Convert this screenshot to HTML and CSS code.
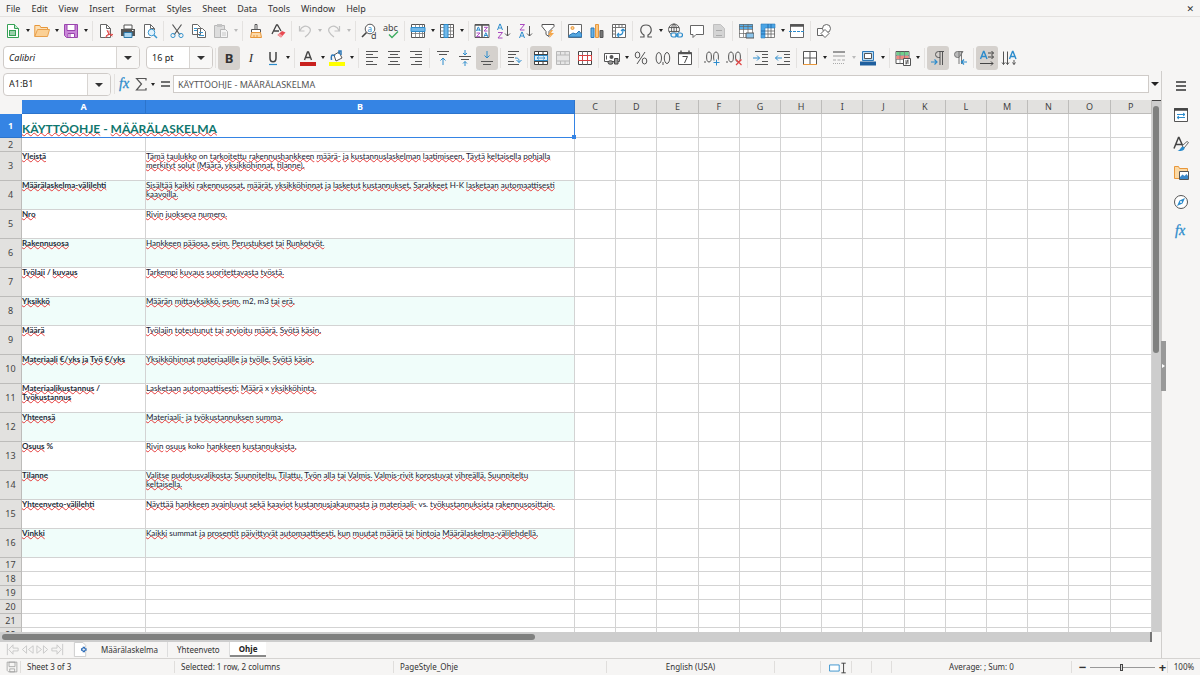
FILE: index.html
```html
<!DOCTYPE html>
<html lang="fi">
<head>
<meta charset="utf-8">
<title>Määrälaskelma</title>
<link rel="stylesheet" href="styles.css">
</head>
<body>
<svg class="sprite" aria-hidden="true">
  <symbol id="new" viewBox="0 0 16 16"><path d="M2.5 1.5h7l4 4v9h-11z" fill="#fff" stroke="#35a155"/><path d="M9.5 1.5v4h4" fill="#c5ecd0" stroke="#35a155"/><path d="M4 7h7v6H4z" fill="#35a155"/><path d="M5 9h5M5 11h5" stroke="#fff"/></symbol>
  <symbol id="open" viewBox="0 0 16 16"><path d="M.8 13.500V2.500h5l1 2h6.700v2" fill="#fce0b5" stroke="#e8973a"/><path d="M.8 13.500 3.500 6.500h12l-2 7z" fill="#fbd095" stroke="#e8a04c"/></symbol>
  <symbol id="save" viewBox="0 0 16 16"><path d="M1.500 1.500h13v13h-11l-2-2z" fill="#c986d8" stroke="#9a45ae"/><path d="M4 1.500h8v6H4z" fill="#fff" stroke="#9a45ae"/><path d="M5 10.500h6.500v4H5z" fill="#fff" stroke="#9a45ae"/><path d="M7 11v3" stroke="#9a45ae"/></symbol>
  <symbol id="pdf" viewBox="0 0 16 16"><path d="M2.500 1.500h6l4 4v9h-10z" fill="#fff" stroke="#666"/><path d="M8.500 1.500v4h4" fill="none" stroke="#666"/><path d="M9 7c1 3 2 5 5.500 6M7 14.500c3-1 4-3 4-7M8 13c2-2 4-2 7-1.500" fill="none" stroke="#e04545"/></symbol>
  <symbol id="print" viewBox="0 0 16 16"><path d="M4 2h8v4H4z" fill="#fff" stroke="#555"/><path d="M1 6h14v7H1z" fill="#555"/><path d="M4 9.500h8v5H4z" fill="#acd6f1" stroke="#2d78a8"/><path d="M12 7.500h1.500" stroke="#fff"/></symbol>
  <symbol id="preview" viewBox="0 0 16 16"><path d="M12.500 7V5.500l-4-4h-6v13h6" fill="#fff" stroke="#666"/><path d="M8.500 1.500v4h4" fill="none" stroke="#666"/><circle cx="9.500" cy="9.500" r="3.300" fill="#e2f2fc" stroke="#3a96cf"/><path d="m12 12 3 3" stroke="#3a96cf" stroke-width="1.500"/></symbol>
  <symbol id="cut" viewBox="0 0 16 16"><path d="M3.500 1.500 11 12M12.500 1.500 5 12" stroke="#555" stroke-width="1.200"/><g fill="none" stroke="#3a96cf"><circle cx="4" cy="12.500" r="2.100"/><circle cx="12" cy="12.500" r="2.100"/></g></symbol>
  <symbol id="copy" viewBox="0 0 16 16"><path d="M1.500 1.500h5l3 3v7h-8zM6.500 5.500h5l3 3v6h-8z" fill="#fff" stroke="#666"/><path d="M3 5.500h3M3 7.500h3M8 9.500h4M8 12.500h5" stroke="#3a96cf"/></symbol>
  <symbol id="paste" viewBox="0 0 16 16"><path d="M1.500 2.500h10v12h-10z" fill="#ddd" stroke="#b8b8b8"/><path d="M4 1h5v3H4z" fill="#c4c4c4"/><path d="M7.500 6.500h5l2 2v6h-7z" fill="#f4f4f4" stroke="#b8b8b8"/><path d="M9 10h4M9 12h4" stroke="#c8c8c8"/></symbol>
  <symbol id="clone" viewBox="0 0 16 16"><path d="M7 1.500h2v5H7z" fill="#fff" stroke="#555"/><path d="M3.500 6.500h9v3h-9z" fill="#fff" stroke="#555"/><path d="M3.500 9.500h9l1 5h-11z" fill="#fcd9a8" stroke="#e8973a"/><path d="M6 14v-2M9 14v-2" stroke="#e8973a"/></symbol>
  <symbol id="clear" viewBox="0 0 16 16"><path d="M2 11 6.500 2h1L11 8M4 8h5" fill="none" stroke="#444" stroke-width="1.300"/><path d="m7.500 12 4.500-4 3.500 1.500-4.500 5z" fill="#e84a52"/><path d="m7.500 12 3.500 2.500 1.500-2-3-2z" fill="#f39da1"/></symbol>
  <symbol id="undo" viewBox="0 0 16 16"><path d="M2.500 3v5h5M3 7.500C5 3 9 2 12 4.500s1 5.500-4 9.500" fill="none" stroke="#c2c2c2" stroke-width="1.200"/></symbol>
  <symbol id="redo" viewBox="0 0 16 16"><path d="M13.500 3v5h-5M13 7.500C11 3 7 2 4 4.500s-1 5.500 4 9.500" fill="none" stroke="#c2c2c2" stroke-width="1.200"/></symbol>
  <symbol id="find" viewBox="0 0 16 16"><circle cx="9" cy="6" r="4.800" fill="#fff" stroke="#555"/><path d="M5.500 9.500 1 14" stroke="#444" stroke-width="1.600"/><text x="6.500" y="8.500" font-size="8" fill="#2d8ccc">a</text><text x="10" y="15.500" font-size="9" fill="#444" stroke="#f6f5f4" stroke-width="1.500" paint-order="stroke">d</text></symbol>
  <symbol id="spell" viewBox="0 0 16 16"><text x="0" y="8" font-size="9" fill="#444">abc</text><path d="m6 11.500 3 3 6-6" fill="none" stroke="#3fae62" stroke-width="1.400"/></symbol>
  <symbol id="row" viewBox="0 0 16 16"><path d="M1.500 1.500h13v13h-13z" fill="#fff" stroke="#555"/><path d="M1.500 10.500h13M5.500 1.500v13M9.500 1.500v13M12.500 1.500v13" stroke="#777" stroke-width=".8"/><path d="M1 4.500h14v4H1z" fill="#72b8e8" stroke="#2d8ccc"/></symbol>
  <symbol id="col" viewBox="0 0 16 16"><path d="M1.500 1.500h13v13h-13z" fill="#fff" stroke="#555"/><path d="M1.500 4.500h13M1.500 8h13M1.500 11.500h13M11.500 1.500v13" stroke="#777" stroke-width=".8"/><path d="M5 1.500h4v13H5z" fill="#72b8e8" stroke="#2d8ccc"/></symbol>
  <symbol id="sort" viewBox="0 0 16 16"><path d="M1 1.500h14v13H1z" fill="#fff" stroke="#555"/><path d="M1 2h14M8 2v12" stroke="#555" stroke-width="1.500"/><g fill="none" stroke-width="1"><path d="m2.500 8 1.700-4h.3l1.700 4M3 7h3M9.700 10.500" stroke="#2d8ccc"/><path d="M2.500 10h3.500l-3.500 3.700H6" stroke="#aa4ac0"/><path d="M10 4.300h3.500L10 8h3.500" stroke="#aa4ac0"/><path d="m10 13.800 1.700-4h.3l1.700 4M10.500 12.500h3" stroke="#2d8ccc"/></g></symbol>
  <symbol id="asc" viewBox="0 0 16 16"><path d="m1.500 7 2.300-6h.4l2.300 6M2.500 5h3.200" fill="none" stroke="#2d8ccc"/><path d="M2 9.500h4.500L2 15h4.500" fill="none" stroke="#aa4ac0"/><path d="M11.500 3v10M9 10.500l2.500 2.500 2.500-2.500" fill="none" stroke="#555"/></symbol>
  <symbol id="desc" viewBox="0 0 16 16"><path d="M2 1.500h4.500L2 7h4.500" fill="none" stroke="#aa4ac0"/><path d="m1.500 15 2.300-6h.4l2.300 6M2.500 13h3.200" fill="none" stroke="#2d8ccc"/><path d="M11.500 3v10M9 10.500l2.500 2.500 2.500-2.500" fill="none" stroke="#555"/></symbol>
  <symbol id="filter" viewBox="0 0 16 16"><path d="M2 1.500h12v2l-5 5v5l-3-2v-3l-4-5z" fill="#fff" stroke="#555"/><path d="m11 7-3 5h2.500l-1.500 3.500 5-5.500h-3l2-3z" fill="#f4a64a"/></symbol>
  <symbol id="image" viewBox="0 0 16 16"><path d="M1.500 1.500h13v13h-13z" fill="#fff" stroke="#666"/><path d="M2 12.500 6 10l3 1 3-3 2.500 3v3H2z" fill="#55a8e0" stroke="#2d78b8"/><circle cx="5.500" cy="5" r="1.500" fill="#fbd095" stroke="#e8973a"/></symbol>
  <symbol id="chart" viewBox="0 0 16 16"><path d="M2 5h3v9.500H2z" fill="#65b2e6" stroke="#2d78b8"/><path d="M6.500 1.500h3v13h-3z" fill="#fbc681" stroke="#e8973a"/><path d="M11 7.500h3v7h-3z" fill="#777" stroke="#555"/></symbol>
  <symbol id="pivot" viewBox="0 0 16 16"><path d="M1.500 1.500h13v13h-13z" fill="#fff" stroke="#666"/><path d="M1.500 4.500h13M4.500 1.500v13M8 2v2M11 2v2M2 8h2M2 11h2" stroke="#777"/><path d="M7 12c4 0 5-1 5-5M6 12l2-2M6 12l2 2M12 6l-2 2M12 6l2 2" fill="none" stroke="#2d8ccc" stroke-width="1.200"/></symbol>
  <symbol id="omega" viewBox="0 0 16 16"><path d="M2 14h4v-2C1 9 2 2 8 2s7 7 2 10v2h4" fill="none" stroke="#555" stroke-width="1.200"/></symbol>
  <symbol id="link" viewBox="0 0 16 16"><g fill="none" stroke="#555" stroke-width=".9"><circle cx="7" cy="6.500" r="5.500"/><ellipse cx="7" cy="6.500" rx="2.500" ry="5.500"/><path d="M2 4.500h10M2 8.500h10M7 1v11"/></g><path d="M4 9.500h12v5H4z" fill="#f6f5f4"/><g fill="none" stroke="#2d8ccc" stroke-width="1.200"><rect x="4" y="10" width="5.500" height="4" rx="2"/><rect x="10" y="10" width="5.500" height="4" rx="2"/><path d="M8 12h4"/></g></symbol>
  <symbol id="comment" viewBox="0 0 16 16"><path d="M1.500 2.500h13v9H7l-3 3v-3H1.500z" fill="#fff" stroke="#666"/></symbol>
  <symbol id="header" viewBox="0 0 16 16"><path d="M2.500 1.500h7l4 4v9h-11z" fill="#d4d4d4" stroke="#c0c0c0"/><path d="M5 7.500h6M5 12.500h6" stroke="#aaa"/></symbol>
  <symbol id="range" viewBox="0 0 16 16"><path d="M1.500 1.500h13v13h-13z" fill="#fff"/><path d="M1 1h14v5H1z" fill="#58aee8"/><path d="M1.500 1.500h13v13h-13zM1 6.500h14M1 10.500h14M5.500 1v13M10 1v13M1 3.500h14" fill="none" stroke="#666" stroke-width=".7"/><path d="M8 10h8v5H8z" fill="#8bc5ec" stroke="#555"/></symbol>
  <symbol id="freeze" viewBox="0 0 16 16"><path d="M1.500 1.500h13v13h-13z" fill="#fff"/><path d="M1.500 1.500h13v13h-13zM5 8h10M5 11h10M8 5v10M11 5v10" fill="none" stroke="#666" stroke-width=".8"/><path d="M1 1h14v4H5v10H1z" fill="#4aa5e6" stroke="#2d78b8" stroke-width=".6"/><path d="M1 8h4M1 11h4M8 1v4M11 1v4" stroke="#1f5f9e" stroke-width=".8"/></symbol>
  <symbol id="split" viewBox="0 0 16 16"><path d="M1.500 1.500h13v13h-13z" fill="#fff" stroke="#666"/><path d="M1 2.500h14" stroke="#555" stroke-width="2.500"/><path d="M0 8.500h16" stroke="#2d8ccc" stroke-dasharray="3 1"/></symbol>
  <symbol id="shapes" viewBox="0 0 16 16"><g fill="#fff" stroke="#666"><path d="M1.500 5.500h7v7h-7z"/><circle cx="10.500" cy="5.500" r="4"/><path d="m9 6.500 4 4-4 4-4-4z"/></g></symbol>

  <symbol id="under" viewBox="0 0 16 16"><path d="M5 2v6c0 5 6 5 6 0V2" fill="none" stroke="#444" stroke-width="1.500"/><path d="M4 14.500h8" stroke="#2d8ccc" stroke-width="1.200"/></symbol>
  <symbol id="fcolor" viewBox="0 0 16 16"><path d="m4.500 10 3-8h1l3 8M6 7.500h4" fill="none" stroke="#444" stroke-width="1.400"/><path d="M0 12h16v4H0z" fill="#c9211e"/></symbol>
  <symbol id="hcolor" viewBox="0 0 16 16"><path d="m5 5 5-3 3 6-6 3z" fill="#fff" stroke="#555"/><path d="M6 6c-4-3-4 1-3.500 4M10 4V1h2v4" fill="none" stroke="#2d78b8" stroke-width="1.500"/><path d="M0 12h16v4H0z" fill="#ff0"/></symbol>
  <symbol id="left" viewBox="0 0 16 16"><path d="M2 1.500h12M2 4.500h7M2 7.500h12M2 11.500h7M2 14.500h11" stroke="#555"/></symbol>
  <symbol id="center" viewBox="0 0 16 16"><path d="M2 1.500h12M4 4.500h8M2 7.500h12M4 11.500h8M2 14.500h12" stroke="#555"/></symbol>
  <symbol id="right" viewBox="0 0 16 16"><path d="M2 1.500h12M7 4.500h7M2 7.500h12M7 11.500h7M3 14.500h11" stroke="#555"/></symbol>
  <symbol id="top" viewBox="0 0 16 16"><path d="M2 1.500h12M4 4.500h8" stroke="#555"/><path d="M8 15V8M5.500 10.500 8 8l2.500 2.500" fill="none" stroke="#2d8ccc"/></symbol>
  <symbol id="middle" viewBox="0 0 16 16"><path d="M2 6.500h12M4 9.500h8" stroke="#555"/><path d="M8 0v5M6 3l2 2 2-2M8 16v-4.500M6 13.500l2-2 2 2" fill="none" stroke="#2d8ccc"/></symbol>
  <symbol id="bottom" viewBox="0 0 16 16"><path d="M2 11.500h12M4 14.500h8" stroke="#555"/><path d="M8 1v7M5.500 5.500 8 8l2.500-2.500" fill="none" stroke="#2d8ccc"/></symbol>
  <symbol id="wrap" viewBox="0 0 16 16"><path d="M2 1.500h11M2 4.500h8M2 7.500h6M2 11.500h6M2 14.500h11" stroke="#555"/><path d="M9 8c4 0 4 1 4 4.500M10.500 10l2.500 2.500 2.500-2.500" fill="none" stroke="#2d8ccc"/></symbol>
  <symbol id="mergec" viewBox="0 0 16 16"><path d="M1.500 1.500h13v13h-13z" fill="#fff" stroke="#444"/><path d="M1.500 4.500h13M1.500 11.500h13M5.500 1.500v3M10 1.500v3M5.500 11.500v3M10 11.500v3" stroke="#444"/><path d="M1.500 5.500h13v5h-13z" fill="#d8ecfa" stroke="#2d8ccc"/><path d="M4 8h8M6 6.500 4 8l2 1.500M10 6.500 12 8l-2 1.500" fill="none" stroke="#2d8ccc" stroke-width=".8"/></symbol>
  <symbol id="merge" viewBox="0 0 16 16"><path d="M1.500 1.500h13v13h-13z" fill="#e6e6e6" stroke="#b8b8b8"/><path d="M1.500 5h13M1.500 11h13M5.500 1.500V5M10 1.500V5M5.500 11v3M10 11v3" stroke="#b8b8b8"/></symbol>
  <symbol id="unmerge" viewBox="0 0 16 16"><path d="M1.500 1.500h13v13h-13z" fill="#fff" stroke="#444"/><path d="M5.500 1.500v13M10.500 1.500v13" stroke="#777"/><path d="M1.500 5.500h13v5h-13zM5.500 5.500v5M10.500 5.500v5" fill="#fff" stroke="#d84040"/></symbol>
  <symbol id="money" viewBox="0 0 16 16"><path d="M.5 3.500h15v8H.5z" fill="#fff" stroke="#555"/><circle cx="7.500" cy="7" r="2" fill="#555"/><path d="M2.500 5.500v4" stroke="#555"/><ellipse cx="6.500" cy="12.500" rx="2.500" ry="1.800" fill="#999" stroke="#444"/><path d="M10.500 8.500h3.500v5.500h-3.500z" fill="#999" stroke="#444"/></symbol>
  <symbol id="percent" viewBox="0 0 16 16"><g fill="none" stroke="#555"><ellipse cx="4.500" cy="5" rx="2.300" ry="3"/><ellipse cx="11.500" cy="11" rx="2.300" ry="3"/><path d="m12 2-8 12"/></g></symbol>
  <symbol id="number" viewBox="0 0 16 16"><g fill="none" stroke="#555"><ellipse cx="3.800" cy="8" rx="2.700" ry="5.500"/><ellipse cx="12" cy="8" rx="2.700" ry="5.500"/></g><path d="M8 12v3" stroke="#555"/></symbol>
  <symbol id="date" viewBox="0 0 16 16"><path d="M1.500 2.500h13v12h-13z" fill="#fff" stroke="#555"/><path d="M1 3.500h14M4 .5v3M12 .5v3" stroke="#555" stroke-width="1.500"/><path d="M5.500 6.500h5l-3 6.500" fill="none" stroke="#444"/></symbol>
  <symbol id="adddec" viewBox="0 0 16 16"><g fill="none" stroke="#555"><ellipse cx="5" cy="7" rx="2.400" ry="5"/><ellipse cx="12" cy="7" rx="2.400" ry="5"/><path d="M1 11v2"/></g><path d="M12.500 9v6M9.500 12h6" stroke="#f6f5f4" stroke-width="3"/><path d="M12.500 9.500v6M9.500 12.500h6" stroke="#2d8ccc"/></symbol>
  <symbol id="deldec" viewBox="0 0 16 16"><g fill="none" stroke="#555"><ellipse cx="5" cy="7" rx="2.400" ry="5"/><ellipse cx="12" cy="7" rx="2.400" ry="5"/><path d="M1 11v2"/></g><path d="m10 9.500 5.500 5.500M15.500 9.500 10 15" stroke="#e04545" stroke-width="1.200"/></symbol>
  <symbol id="indent" viewBox="0 0 16 16"><path d="M2 1.500h13M9 4.500h6M9 7.500h6M9 11.500h6M2 14.500h13" stroke="#555"/><path d="M0 8h6.500M4 5.500 6.500 8 4 10.500" fill="none" stroke="#2d8ccc"/></symbol>
  <symbol id="outdent" viewBox="0 0 16 16"><path d="M2 1.500h13M9 4.500h6M9 7.500h6M9 11.500h6M2 14.500h13" stroke="#555"/><path d="M7 8H.5M3 5.500.5 8 3 10.500" fill="none" stroke="#2d8ccc"/></symbol>
  <symbol id="border" viewBox="0 0 16 16"><path d="M1.500 1.500h13v13h-13zM8 1.500v13M1.500 8h13" fill="#fff" stroke="#555"/><path d="M1 14.500h14" stroke="#e8973a"/></symbol>
  <symbol id="bstyle" viewBox="0 0 16 16"><path d="M2 2h12" stroke="#999" stroke-width="2"/><path d="M2 6h12" stroke="#999"/><path d="M2 10h12" stroke="#aaa" stroke-dasharray="3 1.500"/><path d="M2 13.500h12" stroke="#aaa" stroke-dasharray="1 1"/></symbol>
  <symbol id="bcolor" viewBox="0 0 16 16"><path d="M2.500 1.500h11v9h-11z" fill="#b9dcf5" stroke="#2d78b8"/><path d="M4.500 3.500h7v5h-7z" fill="#fff" stroke="#555"/><path d="M0 11.500h16v4H0z" fill="#1f5f9e"/></symbol>
  <symbol id="cond" viewBox="0 0 16 16"><path d="M1 1.500h13v12H1z" fill="#fff" stroke="#555"/><path d="M1.500 2h12v3h-12z" fill="#6fcf8c"/><path d="M1.500 6h12v3h-12z" fill="#f08a80"/><path d="M1 5.500h13M1 9.500h13M5 1.500v12M9.500 1.500v12" stroke="#777" stroke-width=".7"/><path d="M8.500 8.500h7v7h-7z" fill="#fff" stroke="#555"/><path d="M10 11h4M10 13h4M13 9.500l-2 5" stroke="#444" stroke-width=".8"/></symbol>
  <symbol id="ltr" viewBox="0 0 16 16"><path d="M14 1.500H8.500a3 3 0 0 0 0 6H10M10 1.500V15M12.500 1.500V15" fill="none" stroke="#555"/><path d="M1 12h6M4.500 9.500 7 12l-2.500 2.500" fill="none" stroke="#2d8ccc" stroke-width="1.200"/></symbol>
  <symbol id="rtl" viewBox="0 0 16 16"><path d="M11 1.500H5.500a3 3 0 0 0 0 6H7z" fill="#bbb" stroke="#777"/><path d="M7 1.500V14M9.500 1.500V14" fill="none" stroke="#777"/><path d="M15 12H9.500M12 9.500 9.500 12l2.500 2.500" fill="none" stroke="#2d8ccc" stroke-width="1.200"/></symbol>
  <symbol id="tdh" viewBox="0 0 16 16"><path d="m1.500 9 3-7.500h.5l3 7.500M3 6.500h4" fill="none" stroke="#2d8ccc" stroke-width="1.400"/><path d="M9 3h5.500M9 7h5.500M1 13.500h13M12.500 1l2 2-2 2M12.500 5l2 2-2 2M12 11.500l2 2-2 2" fill="none" stroke="#444"/></symbol>
  <symbol id="tdv" viewBox="0 0 16 16"><path d="m8.500 9 3-7.500h.5l3 7.500M10 6.500h4" fill="none" stroke="#2d8ccc" stroke-width="1.400"/><path d="M2.500 1.500v13M6.500 1.500v13M1 12.500l1.500 2 1.500-2M5 12.500l1.500 2 1.500-2M13 10v4.500M11.500 12.500l1.500 2 1.500-2" fill="none" stroke="#555"/></symbol>

  <symbol id="fx" viewBox="0 0 16 16"><text x="2" y="12" class="fx-glyph">fx</text></symbol>
  <symbol id="sigma" viewBox="0 0 16 16"><path d="M13 4.500v-2H3.500l5 5.500-5 6H13v-2" fill="none" stroke="#555" stroke-width="1.200"/></symbol>
  <symbol id="equals" viewBox="0 0 16 16"><path d="M4 6h9M4 10h9" stroke="#444" stroke-width="1.600"/></symbol>
  <symbol id="burger" viewBox="0 0 16 16"><path d="M3 4h10M3 8h10M3 12h10" stroke="#333" stroke-width="1.400"/></symbol>
  <symbol id="props" viewBox="0 0 16 16"><path d="M1.500 1.500h13v13h-13z" fill="#fff" stroke="#555"/><path d="M1 2.500h14" stroke="#444" stroke-width="2.500"/><path d="M4 7.500h8M4 10.500h8M10 6l2 1.500L10 9M6 9l-2 1.500L6 12" fill="none" stroke="#2d8ccc"/></symbol>
  <symbol id="styles" viewBox="0 0 16 16"><path d="M1 12.500 5.500 1.500h.5l4 9M3 8.500h6" fill="none" stroke="#444" stroke-width="1.500"/><path d="m9 10 5-4.500 1.500 1L11 12z" fill="#fff" stroke="#666"/><path d="M10.500 10.500c-3 0-3 3.500-6 4.500 5 .5 7.500-1 7-3.500z" fill="#2d8ccc"/></symbol>
  <symbol id="gallery" viewBox="0 0 16 16"><path d="M1.500 13.500v-12h4l1 2h8v10z" fill="#fbd9a5" stroke="#e8973a"/><path d="M6.500 6.500h9v8h-9z" fill="#fff" stroke="#555"/><path d="m7 12 2.500-2.500 2 1.500 2-2L15 11v3H7z" fill="#3c88c8"/></symbol>
  <symbol id="compass" viewBox="0 0 16 16"><circle cx="8" cy="8" r="6.500" fill="#fff" stroke="#555"/><path d="m12 4-2.500 5.500L4 12l2.500-5.500z" fill="#2d8ccc"/><circle cx="8" cy="8" r="1" fill="#fff"/></symbol>
  <symbol id="first" viewBox="0 0 16 16"><path d="M2.500 2v12M14 6.500H8.500V3L4 8l4.500 5V9.500H14z" fill="none" stroke="#c9c9c9"/></symbol>
  <symbol id="prev" viewBox="0 0 16 16"><path d="M7 4 2.500 8 7 12zM14 4 9 8l5 4z" fill="none" stroke="#c9c9c9"/></symbol>
  <symbol id="next" viewBox="0 0 16 16"><path d="m2 4 5 4-5 4zM9 4l4.500 4L9 12z" fill="none" stroke="#c9c9c9"/></symbol>
  <symbol id="last" viewBox="0 0 16 16"><path d="M13.500 2v12M2 6.500h5.500V3L12 8l-4.500 5V9.500H2z" fill="none" stroke="#c9c9c9"/></symbol>
  <symbol id="addsheet" viewBox="0 0 16 16"><path d="M1.500.5h9l3 3v12h-12z" fill="#fff" stroke="#ccc"/><path d="M11.500 5v6M8.500 8h6" stroke="#2d6cb8" stroke-width="2.500"/><path d="M10 8h3M11.500 6.500v3" stroke="#fff" stroke-width=".8"/></symbol>
  <symbol id="disk" viewBox="0 0 16 16"><path d="M1.500 1.500h13v13h-11l-2-2zM4 1.500h8v6H4zM5 10.500h6.500v4H5z" fill="none" stroke="#999"/></symbol>
  <symbol id="selmode" viewBox="0 0 20 16"><path d="M1.500 4.500h11v7h-11z" fill="#fff" stroke="#2d8ccc"/><path d="M15 2.500h5M17.500 2.500v11M15 13.500h5" stroke="#333"/></symbol>
</svg>

<div class="app">
  <nav class="menubar" aria-label="Menu">
    <button>File</button><button>Edit</button><button>View</button><button>Insert</button><button>Format</button><button>Styles</button><button>Sheet</button><button>Data</button><button>Tools</button><button>Window</button><button>Help</button>
    <button class="close" aria-label="Close">✕</button>
  </nav>

  <div class="toolbar" role="toolbar" aria-label="Standard">
    <button class="tool" aria-label="New"><svg><use href="#new"/></svg></button><button class="caret" aria-label="New options"></button>
    <button class="tool" aria-label="Open"><svg><use href="#open"/></svg></button><button class="caret" aria-label="Open options"></button>
    <button class="tool" aria-label="Save"><svg><use href="#save"/></svg></button><button class="caret" aria-label="Save options"></button>
    <i class="sep"></i>
    <button class="tool" aria-label="Export PDF"><svg><use href="#pdf"/></svg></button>
    <button class="tool" aria-label="Print"><svg><use href="#print"/></svg></button>
    <button class="tool" aria-label="Preview"><svg><use href="#preview"/></svg></button>
    <i class="sep"></i>
    <button class="tool" aria-label="Cut"><svg><use href="#cut"/></svg></button>
    <button class="tool" aria-label="Copy"><svg><use href="#copy"/></svg></button>
    <button class="tool" aria-label="Paste"><svg><use href="#paste"/></svg></button><button class="caret off" aria-label="Paste options"></button>
    <i class="sep"></i>
    <button class="tool" aria-label="Clone formatting"><svg><use href="#clone"/></svg></button>
    <button class="tool" aria-label="Clear formatting"><svg><use href="#clear"/></svg></button>
    <i class="sep"></i>
    <button class="tool" aria-label="Undo"><svg><use href="#undo"/></svg></button><button class="caret off" aria-label="Undo list"></button>
    <button class="tool" aria-label="Redo"><svg><use href="#redo"/></svg></button><button class="caret off" aria-label="Redo list"></button>
    <i class="sep"></i>
    <button class="tool" aria-label="Find"><svg><use href="#find"/></svg></button>
    <button class="tool" aria-label="Spelling"><svg><use href="#spell"/></svg></button>
    <i class="sep"></i>
    <button class="tool" aria-label="Row"><svg><use href="#row"/></svg></button><button class="caret" aria-label="Row options"></button>
    <button class="tool" aria-label="Column"><svg><use href="#col"/></svg></button><button class="caret" aria-label="Column options"></button>
    <i class="sep"></i>
    <button class="tool" aria-label="Sort"><svg><use href="#sort"/></svg></button>
    <button class="tool" aria-label="Sort ascending"><svg><use href="#asc"/></svg></button>
    <button class="tool" aria-label="Sort descending"><svg><use href="#desc"/></svg></button>
    <button class="tool" aria-label="AutoFilter"><svg><use href="#filter"/></svg></button>
    <i class="sep"></i>
    <button class="tool" aria-label="Image"><svg><use href="#image"/></svg></button>
    <button class="tool" aria-label="Chart"><svg><use href="#chart"/></svg></button>
    <button class="tool" aria-label="Pivot table"><svg><use href="#pivot"/></svg></button>
    <i class="sep"></i>
    <button class="tool" aria-label="Symbol"><svg><use href="#omega"/></svg></button><button class="caret" aria-label="Symbol options"></button>
    <button class="tool" aria-label="Hyperlink"><svg><use href="#link"/></svg></button>
    <button class="tool" aria-label="Comment"><svg><use href="#comment"/></svg></button>
    <button class="tool" aria-label="Headers and footers"><svg><use href="#header"/></svg></button>
    <i class="sep"></i>
    <button class="tool" aria-label="Print range"><svg><use href="#range"/></svg></button>
    <button class="tool" aria-label="Freeze"><svg><use href="#freeze"/></svg></button><button class="caret" aria-label="Freeze options"></button>
    <button class="tool" aria-label="Split window"><svg><use href="#split"/></svg></button>
    <i class="sep"></i>
    <button class="tool" aria-label="Draw functions"><svg><use href="#shapes"/></svg></button>
  </div>

  <div class="toolbar" role="toolbar" aria-label="Formatting">
    <label class="combo combo-font"><select aria-label="Font name"><option>Calibri</option></select></label>
    <label class="combo combo-size"><select aria-label="Font size"><option>16 pt</option></select></label>
    <i class="sep"></i>
    <button class="tool on letter bold" aria-label="Bold">B</button>
    <button class="tool letter italic" aria-label="Italic">I</button>
    <button class="tool" aria-label="Underline"><svg><use href="#under"/></svg></button><button class="caret" aria-label="Underline options"></button>
    <i class="sep"></i>
    <button class="tool" aria-label="Font colour"><svg><use href="#fcolor"/></svg></button><button class="caret" aria-label="Font colour options"></button>
    <button class="tool" aria-label="Background colour"><svg><use href="#hcolor"/></svg></button><button class="caret" aria-label="Background options"></button>
    <i class="sep"></i>
    <button class="tool" aria-label="Align left"><svg><use href="#left"/></svg></button>
    <button class="tool" aria-label="Center"><svg><use href="#center"/></svg></button>
    <button class="tool" aria-label="Align right"><svg><use href="#right"/></svg></button>
    <i class="sep"></i>
    <button class="tool" aria-label="Align top"><svg><use href="#top"/></svg></button>
    <button class="tool" aria-label="Align middle"><svg><use href="#middle"/></svg></button>
    <button class="tool on" aria-label="Align bottom"><svg><use href="#bottom"/></svg></button>
    <i class="sep"></i>
    <button class="tool" aria-label="Wrap text"><svg><use href="#wrap"/></svg></button>
    <i class="sep"></i>
    <button class="tool on" aria-label="Merge and center"><svg><use href="#mergec"/></svg></button>
    <button class="tool" aria-label="Merge"><svg><use href="#merge"/></svg></button>
    <button class="tool" aria-label="Unmerge"><svg><use href="#unmerge"/></svg></button>
    <i class="sep"></i>
    <button class="tool" aria-label="Currency"><svg><use href="#money"/></svg></button><button class="caret" aria-label="Currency options"></button>
    <button class="tool" aria-label="Percent"><svg><use href="#percent"/></svg></button>
    <button class="tool" aria-label="Number"><svg><use href="#number"/></svg></button>
    <button class="tool" aria-label="Date"><svg><use href="#date"/></svg></button>
    <i class="sep"></i>
    <button class="tool" aria-label="Add decimal"><svg><use href="#adddec"/></svg></button>
    <button class="tool" aria-label="Delete decimal"><svg><use href="#deldec"/></svg></button>
    <i class="sep"></i>
    <button class="tool" aria-label="Increase indent"><svg><use href="#indent"/></svg></button>
    <button class="tool" aria-label="Decrease indent"><svg><use href="#outdent"/></svg></button>
    <i class="sep"></i>
    <button class="tool" aria-label="Borders"><svg><use href="#border"/></svg></button><button class="caret" aria-label="Border options"></button>
    <button class="tool" aria-label="Border style"><svg><use href="#bstyle"/></svg></button><button class="caret off" aria-label="Border style options"></button>
    <button class="tool" aria-label="Border colour"><svg><use href="#bcolor"/></svg></button><button class="caret" aria-label="Border colour options"></button>
    <i class="sep"></i>
    <button class="tool" aria-label="Conditional"><svg><use href="#cond"/></svg></button><button class="caret" aria-label="Conditional options"></button>
    <i class="sep"></i>
    <button class="tool on" aria-label="Left to right"><svg><use href="#ltr"/></svg></button>
    <button class="tool" aria-label="Right to left"><svg><use href="#rtl"/></svg></button>
    <i class="sep"></i>
    <button class="tool on" aria-label="Text direction horizontal"><svg><use href="#tdh"/></svg></button>
    <button class="tool" aria-label="Text direction vertical"><svg><use href="#tdv"/></svg></button>
  </div>

  <div class="work">
    <main class="main">
      <div class="formula">
        <label class="combo combo-name"><select aria-label="Name box"><option>A1:B1</option></select></label>
        <i class="sep"></i>
        <button class="mini" aria-label="Function wizard"><svg><use href="#fx"/></svg></button>
        <button class="mini" aria-label="Sum"><svg><use href="#sigma"/></svg></button><button class="caret" aria-label="Sum options"></button>
        <button class="mini" aria-label="Formula"><svg><use href="#equals"/></svg></button>
        <input class="formula-input" aria-label="Input line" value="KÄYTTÖOHJE - MÄÄRÄLASKELMA">
        <button class="caret expand" aria-label="Expand"></button>
      </div>
      <div class="grid-row">
        <div class="sheet">
          <table>
            <colgroup id="cols"><col class="c-head"><col class="c-a"><col class="c-b"></colgroup>
            <thead><tr id="heads"><th></th></tr></thead>
            <tbody id="rows"></tbody>
          </table>
        </div>
        <div class="vscroll"><div class="vthumb"></div></div>
      </div>
      <div class="hscroll"><div class="hthumb"></div></div>
      <div class="tabs">
        <button aria-label="First sheet"><svg><use href="#first"/></svg></button>
        <button aria-label="Previous sheet"><svg><use href="#prev"/></svg></button>
        <button aria-label="Next sheet"><svg><use href="#next"/></svg></button>
        <button aria-label="Last sheet"><svg><use href="#last"/></svg></button>
        <button class="add" aria-label="Add sheet"><svg><use href="#addsheet"/></svg></button>
        <button class="tab">Määrälaskelma</button>
        <button class="tab">Yhteenveto</button>
        <button class="tab current">Ohje</button>
      </div>
    </main>
    <aside class="sidebar">
      <button aria-label="Settings"><svg><use href="#burger"/></svg></button>
      <button aria-label="Properties"><svg><use href="#props"/></svg></button>
      <button aria-label="Styles"><svg><use href="#styles"/></svg></button>
      <button aria-label="Gallery"><svg><use href="#gallery"/></svg></button>
      <button aria-label="Navigator"><svg><use href="#compass"/></svg></button>
      <button aria-label="Functions"><svg><use href="#fx"/></svg></button>
      <div class="handle"></div>
    </aside>
  </div>

  <footer class="status">
    <span class="cell-icon"><svg><use href="#disk"/></svg></span>
    <span>Sheet 3 of 3</span>
    <span>Selected: 1 row, 2 columns</span>
    <span>PageStyle_Ohje</span>
    <span class="mid">English (USA)</span>
    <span></span>
    <span class="cell-icon"><svg class="wide"><use href="#selmode"/></svg></span>
    <span></span>
    <span></span>
    <span class="mid">Average: ; Sum: 0</span>
    <span class="zoom"><button aria-label="Zoom out">−</button><input type="range" min="0" max="100" value="49" aria-label="Zoom"><button aria-label="Zoom in">+</button></span>
    <span class="mid">100%</span>
  </footer>
</div>
<script src="grid.js"></script>
</body>
</html>
```
FILE: styles.css
```css
* { box-sizing: border-box; }
body { margin: 0; background: #f6f5f4; color: #333; font: 9px/12px "Noto Sans", "Open Sans", sans-serif; }
button { margin: 0; padding: 0; border: 0; background: none; color: inherit; font: inherit; }
svg { display: block; width: 16px; height: 16px; font-family: "Noto Sans", sans-serif; }
.sprite { display: none; }
.fx-glyph { font: italic 14px "Liberation Serif", serif; fill: #2d8ccc; stroke: #2d8ccc; stroke-width: .3; }
.app { display: flex; flex-direction: column; height: 100vh; overflow: hidden; }

.menubar { display: flex; gap: 11px; height: 17px; padding: 1px 6px 0; border-bottom: 1px solid #e4e2e0; flex: none; }
.menubar .close { margin-left: auto; font: bold 9px "DejaVu Sans", sans-serif; }

.toolbar { display: flex; align-items: center; height: 27px; padding-left: 2px; flex: none; }
.tool { display: flex; align-items: center; justify-content: center; width: 22px; height: 24px; border-radius: 3px; flex: none; }
.tool.on { background: #d5d1cd; }
.letter { font: 13px/24px "Noto Sans", sans-serif; }
.bold { font-weight: 700; }
.italic { font-style: italic; font-family: "Liberation Serif", serif; }
.caret { width: 7px; height: 20px; display: flex; align-items: center; justify-content: center; flex: none; }
.caret::before { content: ""; border: 2px solid transparent; border-top: 3px solid #222; border-bottom: 0; }
.caret.off::before { border-top-color: #bbb; }
.sep { width: 5px; height: 20px; background: linear-gradient(#e4e2e0, #e4e2e0) center / 1px 100% no-repeat; flex: none; }
.caret + .sep { width: 6px; }

.combo { position: relative; display: block; height: 23px; border: 1px solid #cfcbc8; border-radius: 4px; background: #fff; overflow: hidden; flex: none; }
.combo select { width: 100%; height: 100%; padding: 0 26px 0 5px; border: 0; background: none; color: #222; font: inherit; appearance: none; }
.combo::before { content: ""; position: absolute; right: 0; top: 0; width: 22px; height: 100%; background: #f8f7f6; border-left: 1px solid #d8d5d2; }
.combo::after { content: ""; position: absolute; right: 7px; top: 9px; border: 4px solid transparent; border-top-color: #333; border-bottom: 0; }
.combo-font { width: 137px; margin: 0 6px 0 1px; }
.combo-font select { font-style: italic; }
.combo-size { width: 67px; }
.combo-name { width: 108px; margin: 0 1px 0 3px; }

.work { display: flex; flex: 1; min-height: 0; }
.main { display: flex; flex-direction: column; flex: 1; min-width: 0; }
.formula { display: flex; align-items: center; height: 29px; padding-bottom: 3px; flex: none; }
.mini { width: 16px; flex: none; }
.formula .caret { width: 8px; }
.formula .expand { width: 12px; }
.formula .expand::before { border-width: 4px 4px 0; }
.formula-input { flex: 1; min-width: 0; height: 18px; padding: 0 4px; border: 1px solid #cfcbc8; background: #fff; color: #555; font: inherit; }

.grid-row { display: flex; flex: 1; min-height: 0; }
.sheet { flex: 1; min-width: 0; overflow: hidden; background: #fff; }
.sheet table { width: 100%; table-layout: fixed; border-collapse: separate; border-spacing: 0; }
.c-head { width: 22px; }
.c-a { width: 124px; }
.c-b { width: 429px; }
.sheet th { height: 14px; padding: 0; border-right: 1px solid #bdbcba; border-bottom: 1px solid #bdbcba; background: #e2e1df; color: #444; font-size: 9px; line-height: 12px; font-weight: 400; }
.sheet thead th:first-child { background: #f6f5f4; border-color: #f6f5f4; }
.sheet th.sel { background: #3584e4; border-color: #2c74cc; color: #fff; font-weight: 700; }
.sheet td { height: 14px; padding: 0 12px 0 0; border-right: 1px solid #d3d3d3; border-bottom: 1px solid #d3d3d3; vertical-align: top; color: #223; font: 8px/9px Lato, sans-serif; overflow: hidden; }
.sheet .label { padding-right: 1px; font-weight: 700; color: #1f2d3a; }
.sheet tr.note td { height: 29px; }
.sheet tr.tint .fill { background: #f0fdfa; }
.sheet tr.first td { height: 24px; }
.sheet td.title { position: relative; overflow: visible; vertical-align: bottom; border-right: 1px solid #3584e4; border-bottom: 1px solid #3584e4; color: #0f766e; font-size: 12px; line-height: 16px; font-weight: 700; }
.title::after { content: ""; position: absolute; right: -2px; bottom: -2px; width: 4px; height: 4px; background: #3584e4; }
.typo { text-decoration: underline wavy #e53c3c 1px; text-underline-offset: -1px; text-decoration-skip-ink: none; }

.vscroll { width: 9px; padding: 5px 2px 0 1px; background: #cdcdcd; border-top: 1px solid #444; flex: none; }
.vthumb { height: 47%; border-radius: 3px; background: #7f807f; }
.hscroll { height: 10px; margin-right: 9px; padding: 2px; background: #cdcdcd; border-right: 2px solid #777; flex: none; }
.hthumb { width: 46.5%; height: 6px; border-radius: 3px; background: #7f807f; }
.tabs { display: flex; height: 16px; padding-left: 5px; font-size: 8px; flex: none; }
.tabs button { height: 15px; }
.tabs button svg { width: 15px; height: 15px; }
.tabs .add { margin: 0 4px 0 8px; }
.tabs .tab { padding: 0 9px; border-right: 1px solid #ddd; }
.tabs .tab.current { background: #fff; border: 0; border-bottom: 2px solid #888; font-weight: 700; color: #222; }

.sidebar { position: relative; display: flex; flex-direction: column; align-items: center; gap: 13px; width: 39px; padding-top: 7px; border-left: 1px solid #d0cecc; flex: none; }
.handle { position: absolute; left: -1px; top: 46%; width: 5px; height: 50px; background: #999; }
.handle::after { content: ""; position: absolute; top: 23px; left: 1px; border: 2px solid transparent; border-left: 3px solid #fff; border-right: 0; }

.status { display: grid; grid-template-columns: 21px 154fr 219fr 213fr 168fr 46px 31px 20px 20px 180fr 96px 32px; align-items: center; height: 17px; border-top: 1px solid #d5d3d1; font-size: 8px; flex: none; }
.status > span { height: 12px; padding-left: 6px; border-right: 1px solid #e0dedc; white-space: nowrap; }
.status > .mid { padding: 0; text-align: center; }
.status > span:last-child { border: 0; }
.status svg { width: 12px; height: 12px; }
.status svg.wide { width: 20px; height: 14px; }
.zoom { display: flex; align-items: center; gap: 3px; }
.zoom button { width: 9px; font: bold 13px/12px "Noto Sans", sans-serif; }
.zoom input { flex: 1; min-width: 0; height: 8px; margin: 0; background: linear-gradient(#999, #999) center / 100% 1px no-repeat; appearance: none; }
.zoom input::-webkit-slider-thumb { width: 3px; height: 7px; border: 1px solid #444; background: #ddd; appearance: none; }
```
FILE: grid.js
```js
const notes = [
  ["Yleistä", "Tämä taulukko on tarkoitettu rakennushankkeen määrä- ja kustannuslaskelman laatimiseen. Täytä keltaisella pohjalla merkityt solut (Määrä, yksikköhinnat, tilanne)."],
  ["Määrälaskelma-välilehti", "Sisältää kaikki rakennusosat, määrät, yksikköhinnat ja lasketut kustannukset. Sarakkeet H-K lasketaan automaattisesti kaavoilla."],
  ["Nro", "Rivin juokseva numero."],
  ["Rakennusosa", "Hankkeen pääosa, esim. Perustukset tai Runkotyöt."],
  ["Työlaji / kuvaus", "Tarkempi kuvaus suoritettavasta työstä."],
  ["Yksikkö", "Määrän mittayksikkö, esim. m2, m3 tai erä."],
  ["Määrä", "Työlajin toteutunut tai arvioitu määrä. Syötä käsin."],
  ["Materiaali €/yks ja Työ €/yks", "Yksikköhinnat materiaalille ja työlle. Syötä käsin."],
  ["Materiaalikustannus / Työkustannus", "Lasketaan automaattisesti: Määrä x yksikköhinta."],
  ["Yhteensä", "Materiaali- ja työkustannuksen summa."],
  ["Osuus %", "Rivin osuus koko hankkeen kustannuksista."],
  ["Tilanne", "Valitse pudotusvalikosta: Suunniteltu, Tilattu, Työn alla tai Valmis. Valmis-rivit korostuvat vihreällä, Suunniteltu keltaisella."],
  ["Yhteenveto-välilehti", "Näyttää hankkeen avainluvut sekä kaaviot kustannusjakaumasta ja materiaali- vs. työkustannuksista rakennusosittain."],
  ["Vinkki", "Kaikki summat ja prosentit päivittyvät automaattisesti, kun muutat määriä tai hintoja Määrälaskelma-välilehdellä."]
];
const known = new Set(["on", "koko", "H-K", "m2,", "m3", "x", "vs.", "/", "%", "-", "summat"]);
const spell = text => text.split(" ").map(w => known.has(w) ? w : `<span class="typo">${w}</span>`).join(" ");
const letters = [..."ABCDEFGHIJKLMNOP"];
const blanks = "<td></td>".repeat(letters.length - 2);

document.getElementById("cols").insertAdjacentHTML("beforeend", "<col>".repeat(letters.length - 2));
document.getElementById("heads").insertAdjacentHTML("beforeend",
  letters.map((l, i) => `<th scope="col"${i < 2 ? ' class="sel"' : ""}>${l}</th>`).join(""));

let html = `<tr class="first"><th scope="row" class="sel">1</th><td class="title" colspan="2">${spell("KÄYTTÖOHJE - MÄÄRÄLASKELMA")}</td>${blanks}</tr>`;
for (let n = 2; n <= 22; n++) {
  const note = notes[n - 3];
  html += note
    ? `<tr class="note${n % 2 ? "" : " tint"}"><th scope="row">${n}</th><td class="fill label">${spell(note[0])}</td><td class="fill">${spell(note[1])}</td>${blanks}</tr>`
    : `<tr><th scope="row">${n}</th><td></td><td></td>${blanks}</tr>`;
}
document.getElementById("rows").innerHTML = html;
```
